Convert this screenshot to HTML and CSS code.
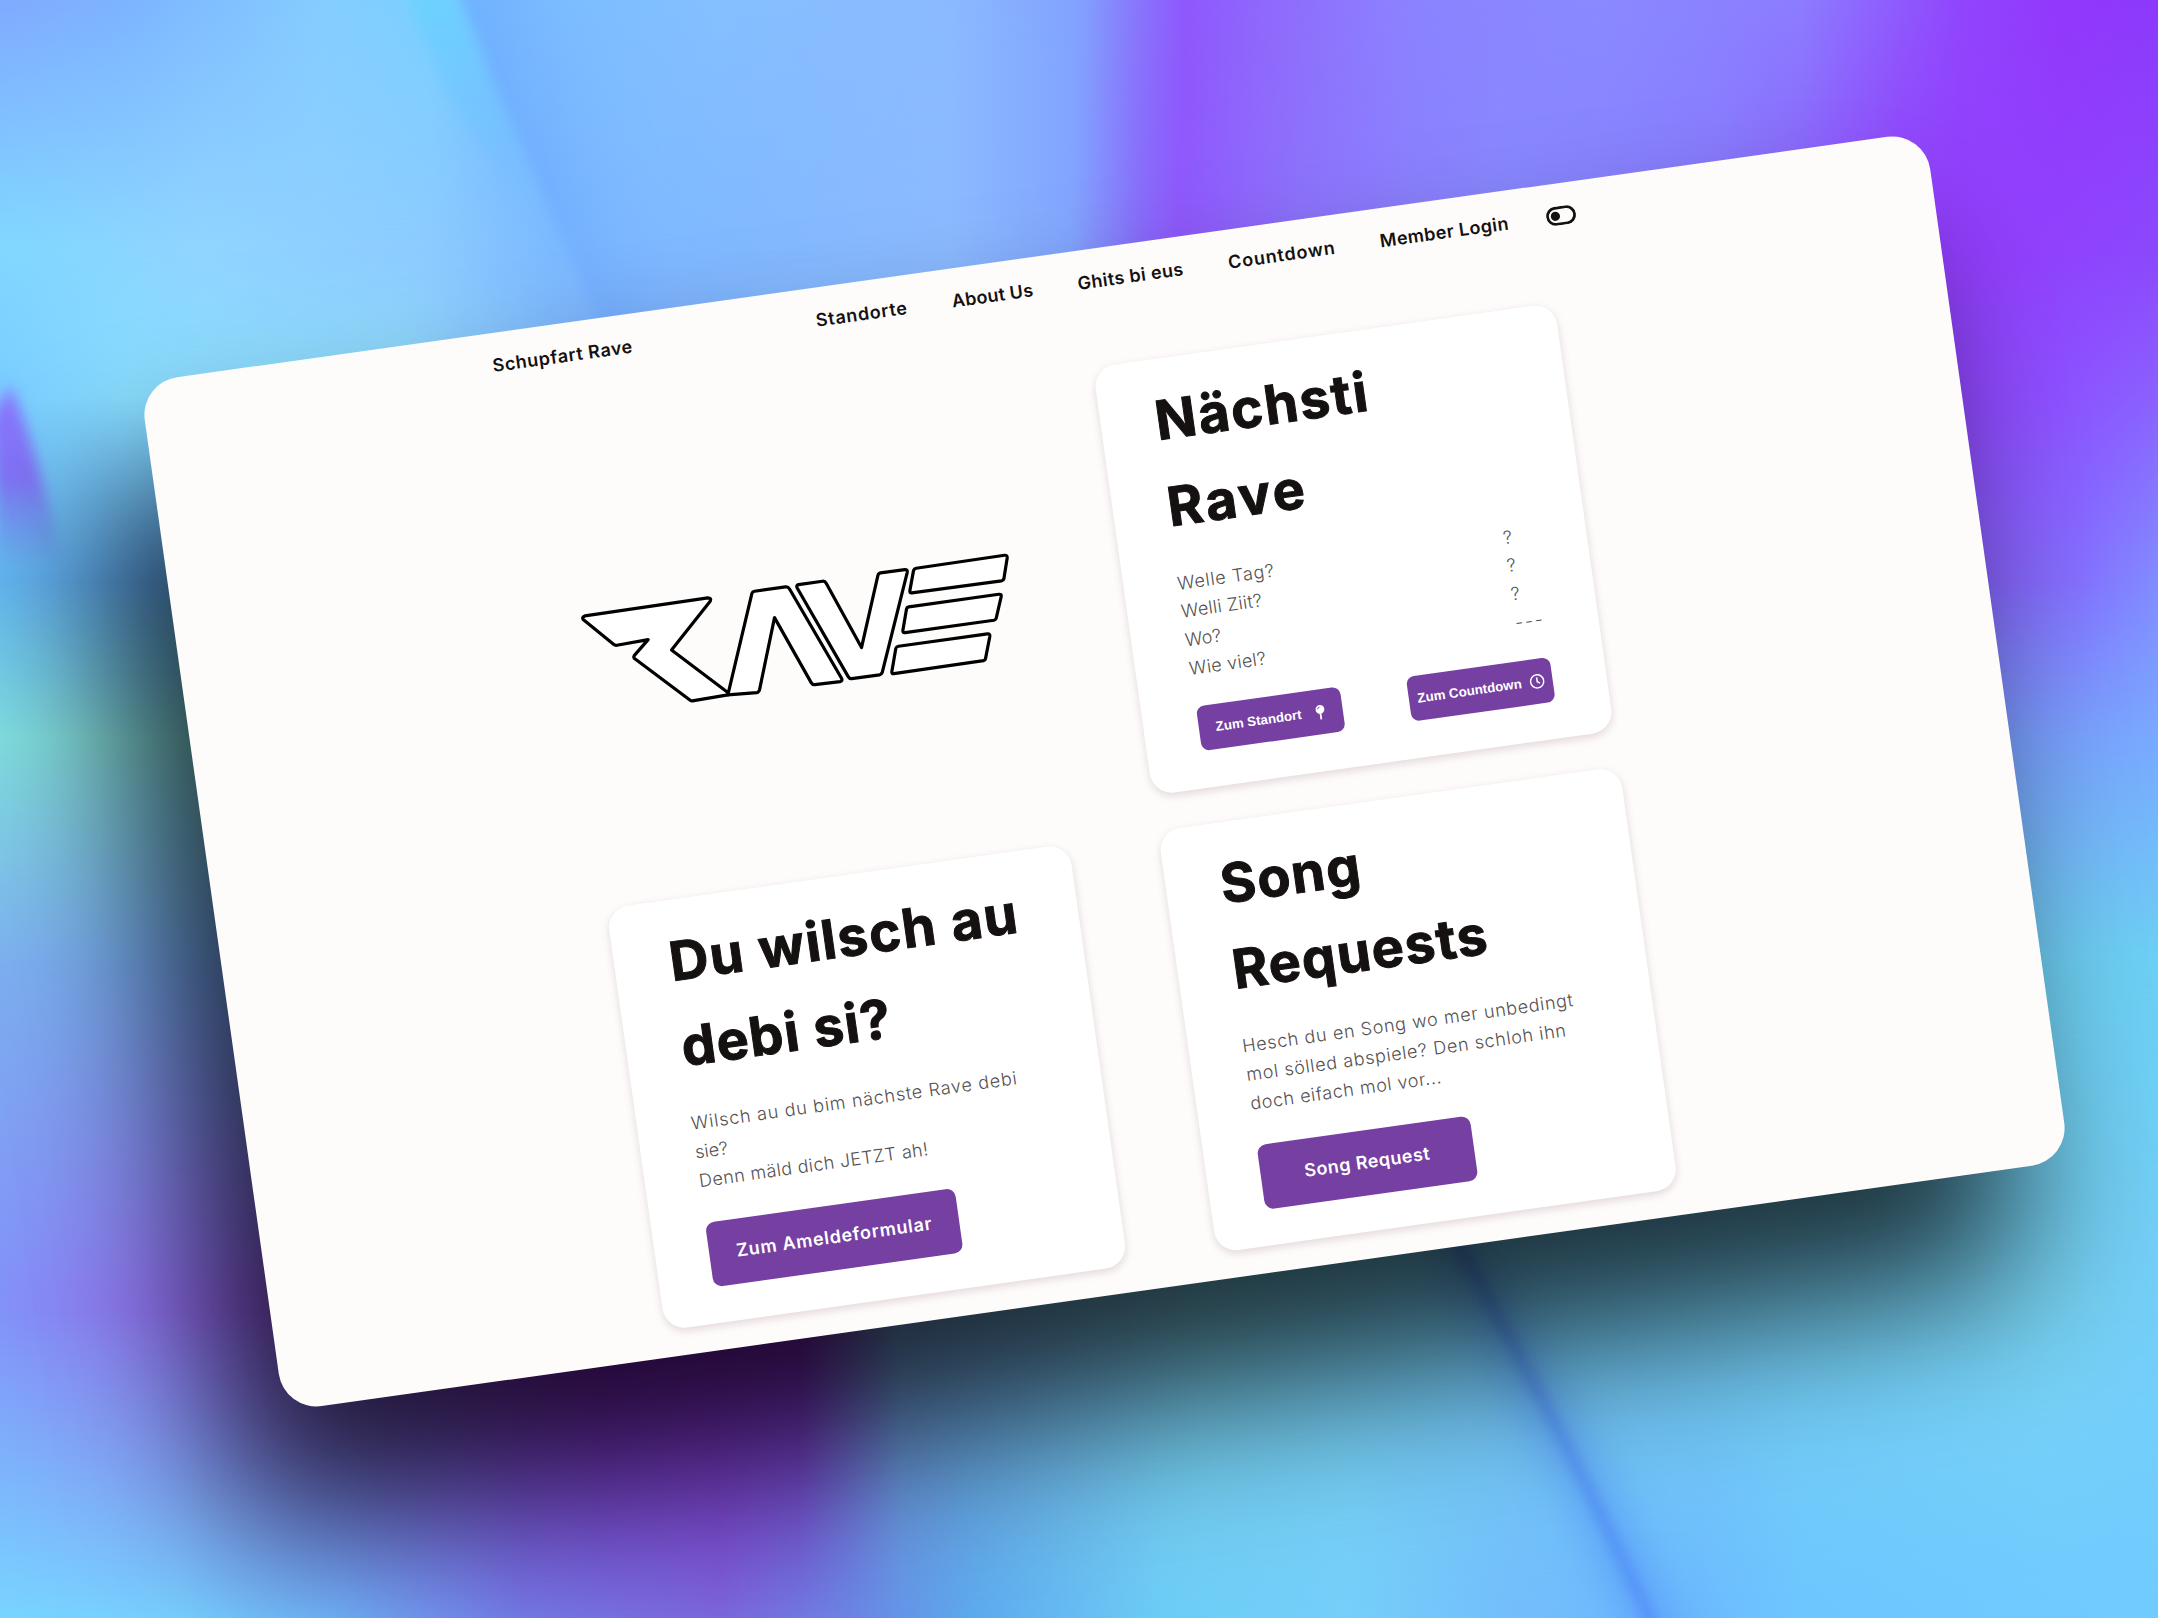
FILE: index.html
```html
<!DOCTYPE html>
<html lang="de-CH">
<head>
  <meta charset="utf-8">
  <title>Schupfart Rave</title>
  <link rel="stylesheet" href="styles.css">
</head>
<body>
  <div class="stage">
    <div class="backdrop">
      <div class="band band-1"></div>
      <div class="band band-2"></div>
      <div class="band band-3"></div>
      <div class="band band-4"></div>
      <div class="band band-5"></div>
      <div class="band band-6"></div>
      <div class="band band-7"></div>
      <div class="band band-8"></div>
      <svg class="streaks" viewBox="0 0 2158 1618" width="2158" height="1618">
        <defs>
          <filter id="soft" x="-50%" y="-50%" width="200%" height="200%"><feGaussianBlur stdDeviation="7"/></filter>
          <filter id="wide" x="-80%" y="-80%" width="260%" height="260%"><feGaussianBlur stdDeviation="22"/></filter>
          <filter id="shade" x="-20%" y="-30%" width="140%" height="160%" color-interpolation-filters="sRGB"><feGaussianBlur stdDeviation="76"/></filter>
          <linearGradient id="fold" gradientUnits="userSpaceOnUse" x1="520" y1="160" x2="640" y2="115">
            <stop offset="0" stop-color="#68a6ff" stop-opacity=".65"/>
            <stop offset="1" stop-color="#7fb6ff" stop-opacity="0"/>
          </linearGradient>
          <linearGradient id="cyan" x1="0" y1="0" x2="0" y2="1">
            <stop offset="0" stop-color="#6ad6ff"/>
            <stop offset="1" stop-color="#6ab8ff" stop-opacity="0"/>
          </linearGradient>
          <linearGradient id="wedge" x1="0" y1="0" x2="0" y2="1">
            <stop offset="0" stop-color="#8a78ff"/>
            <stop offset=".5" stop-color="#8272f8"/>
            <stop offset="1" stop-color="#6a80f0" stop-opacity="0"/>
          </linearGradient>
          <linearGradient id="ray" gradientUnits="userSpaceOnUse" x1="1460" y1="1250" x2="1680" y2="1640">
            <stop offset="0" stop-color="#3c74e0" stop-opacity=".7"/>
            <stop offset="1" stop-color="#4f8bfa"/>
          </linearGradient>
        </defs>
        <path d="M442 -40 L458 0 L499 100 L537 183 L608 340 L770 340 L600 -40 Z" fill="url(#fold)" filter="url(#soft)"/>
        <path d="M400 -40 L442 -40 L458 0 L499 100 L560 240 C500 180 430 100 400 -40 Z" fill="url(#cyan)" filter="url(#soft)"/>
        <path d="M10 385 C30 430 45 490 62 560 L0 570 L-10 420 Z" fill="url(#wedge)" filter="url(#soft)"/>
        <path d="M1445 1230 C1500 1330 1590 1480 1670 1660" fill="none" stroke="url(#ray)" stroke-width="44" filter="url(#wide)" opacity=".5"/>
        <path d="M1450 1230 C1510 1340 1590 1480 1668 1660" fill="none" stroke="url(#ray)" stroke-width="9" filter="url(#soft)"/>
        <rect x="148" y="362" width="1802" height="1039" rx="38" fill="#000" fill-opacity=".75" transform="rotate(-8 1103.75 771.5)" filter="url(#shade)"/>
      </svg>
    </div>

    <div class="window">
      <header class="navbar">
        <a class="brand">Schupfart Rave</a>
        <nav class="links">
          <a class="n-standorte">Standorte</a>
          <a class="n-about">About Us</a>
          <a class="n-ghits">Ghits bi eus</a>
          <a class="n-countdown">Countdown</a>
          <a class="n-login">Member Login</a>
          <svg class="toggle" viewBox="0 0 30 19" width="30" height="19">
            <rect x="1.4" y="1.4" width="27.2" height="16.2" rx="8.1" fill="none" stroke="#151111" stroke-width="2.8"/>
            <circle cx="9.3" cy="9.5" r="4.6" fill="#151111"/>
          </svg>
        </nav>
      </header>

      <main class="cards">
        <svg class="logo" viewBox="0 0 467 432">
          <g transform="translate(6.4 86.8) rotate(8) scale(.33333)" fill="#fff" stroke="#000" stroke-width="9.6" stroke-linejoin="round">
            <path d="M76 257 L445 203 Q457 203 452 213 L336 359 L505 487 L505 494 L403 511 Q396 513 391 509 L224 384 Q221 380 224 376 L266 328 L172 345 Q167 346 162 342 L71 268 Q66 261 76 257 Z"/>
            <path d="M505 494 L577 190 Q579 184 585 183 L678 170 Q686 169 690 176 L846 444 Q850 452 842 454 L766 463 Q759 464 755 457 L645 262 L600 479 Q598 486 592 487 Z"/>
            <path d="M717 163 L789 153 Q796 152 800 159 L906 352 L955 136 Q957 129 963 128 L1036 118 Q1045 118 1043 127 L968 427 Q966 433 960 434 L877 445 Q870 446 866 439 L713 173 Q709 165 717 163 Z"/>
            <path d="M1070 114 L1335 75 Q1344 74 1343 83 L1333 146 Q1332 151 1326 152 L1057 188 Q1050 189 1051 181 L1062 121 Q1064 115 1070 114 Z"/>
            <path d="M1048 230 L1318 192 Q1327 191 1325 199 L1310 264 Q1308 269 1303 270 L1037 307 Q1029 308 1030 301 L1041 236 Q1042 231 1048 230 Z"/>
            <path d="M1017 348 L1284 311 Q1292 310 1291 318 L1278 385 Q1277 390 1272 391 L1003 430 Q996 431 997 424 L1009 354 Q1011 349 1017 348 Z"/>
          </g>
        </svg>

        <section class="card">
          <h1><span class="h-next">Nächsti</span><br><span class="h-rave">Rave</span></h1>
          <div class="facts">
            <p><span class="t-day">Welle Tag?</span><br><span class="t-price">Welli Ziit?</span><br>Wo?<br><span class="t-price">Wie viel?</span></p>
            <p class="answers">?<br>?<br>?<br><span class="dashes">---</span></p>
          </div>
          <div class="actions">
            <button class="btn-small">Zum Standort
              <svg viewBox="0 0 11 16" width="11" height="16">
                <circle cx="5.5" cy="5" r="4.4" fill="#fff"/>
                <path d="M5.5 9v6" stroke="#fff" stroke-width="1.8"/>
                <path d="M3.2 4.8A2.3 2.3 0 0 1 5.5 2.6" fill="none" stroke="#7640a2" stroke-width=".8"/>
              </svg>
            </button>
            <button class="btn-small btn-clock">Zum Countdown
              <svg viewBox="0 0 15 15" width="15" height="15" fill="none" stroke="#fff" stroke-width="1.5">
                <circle cx="7.5" cy="7.5" r="6.6"/>
                <path d="M7.5 3.4v4.4l2.6 1.8"/>
              </svg>
            </button>
          </div>
        </section>

        <section class="card">
          <h1><span class="h-du">Du wilsch au</span><br><span class="h-debi">debi si?</span></h1>
          <p><span class="t-wilsch">Wilsch au du bim nächste Rave debi</span><br>sie?<br><span class="t-denn">Denn mäld dich JETZT ah!</span></p>
          <a class="btn btn-form">Zum Ameldeformular</a>
        </section>

        <section class="card">
          <h1><span class="h-song">Song</span><br><span class="h-song">Requests</span></h1>
          <p><span class="t-song">Hesch du en Song wo mer unbedingt</span><br><span class="t-song">mol sölled abspiele? Den schloh ihn</span><br><span class="t-vor">doch eifach mol vor...</span></p>
          <a class="btn btn-song">Song Request</a>
        </section>
      </main>
    </div>
  </div>
</body>
</html>
```

FILE: styles.css
```css
* { box-sizing: border-box; }
html { font-size: 18px; }
body {
  margin: 0;
  overflow: hidden;
  font-family: Inter, "Noto Sans", sans-serif;
  line-height: 1.6;
  color: #151111;
}
h1, p { margin: 0; }

.stage {
  display: grid;
  width: 2158px;
  height: 1618px;
  overflow: hidden;
}
.backdrop, .window { grid-area: 1 / 1; }
.backdrop { display: grid; isolation: isolate; }
.band, .streaks { grid-area: 1 / 1; display: block; }
.streaks { z-index: 1; }

/* Each band fades in from the previous one's height to its own. */
.band-1 { background: linear-gradient(90deg, #80aaff 0, #7db4ff 130px, #85cdff 320px, #7cd0ff 430px, #78bdff 500px, #85c0ff 720px, #8bbaff 950px, #82a2ff 1080px, #8878fc 1135px, #8f58fc 1185px, #9068fc 1260px, #8c82ff 1400px, #8a8aff 1600px, #8c7dff 1800px, #9146fc 1960px, #9337fc 2060px, #8c3afc 2158px); }
.band-2 { background: linear-gradient(90deg, #80d8ff 0, #90d5ff 200px, #8ccbff 430px, #7cbaff 550px, #80b8ff 700px, #8bbaff 950px, #82a6ff 1070px, #876cfb 1140px, #8f58fc 1180px, #8c73fc 1300px, #8888ff 1500px, #8778ff 1720px, #913cfc 1900px, #9140fc 2020px, #8c48fc 2158px); --a: 0px; --b: 250px; }
.band-3 { background: linear-gradient(90deg, #78ccff 0, #88dcff 120px, #90dcfa 400px, #7ca8fa 620px, #88c0ff 900px, #8888ff 1500px, #9040fa 1900px, #8c50ff 2050px, #8a62ff 2158px); --a: 250px; --b: 400px; }
.band-4 { background: linear-gradient(90deg, #64b8f4 0, #60a8ee 150px, #70c8f0 300px, #8888ff 1500px, #8458f4 1930px, #8470ff 2080px, #828cff 2158px); --a: 400px; --b: 580px; }
.band-5 { background: linear-gradient(90deg, #80dfe0 0, #82d8d8 100px, #78d0dc 300px, #8888ff 1500px, #7898fa 1960px, #78aaff 2158px); --a: 580px; --b: 740px; }
.band-6 { background: linear-gradient(90deg, #7cb0f0 0, #78acee 120px, #70a0f0 280px, #70c0e8 900px, #78c8f0 1500px, #6cd0f4 2158px); --a: 740px; --b: 960px; }
.band-7 { background: linear-gradient(90deg, #8292f8 0, #8c7aee 120px, #8c58e0 280px, #8410c4 600px, #7c18bc 800px, #70a0d8 900px, #78cce8 1200px, #70c8f0 1500px, #78d4f4 2050px, #74d0fa 2158px); --a: 960px; --b: 1290px; }
.band-8 { background: linear-gradient(90deg, #78d6ff 0, #76d0ff 180px, #70b4fc 340px, #747ce8 520px, #7c68de 720px, #6a86e4 850px, #5ca8ee 970px, #6cccf6 1160px, #74cffa 1350px, #74bcfc 1520px, #6cbaff 1700px, #6cc6ff 1800px, #70cbff 2158px); --a: 1310px; --b: 1625px; }
.band + .band {
  -webkit-mask-image: linear-gradient(180deg, transparent var(--a), #000 var(--b));
  mask-image: linear-gradient(180deg, transparent var(--a), #000 var(--b));
}

.window {
  width: 1802.5px;
  height: 1039px;
  margin: 252px 0 0 202.5px;
  padding: 18.5px 0 0 352px;
  border-radius: 38px;
  background: #fefcfb;
  transform: rotate(-8deg);
}

.navbar {
  display: flex;
  align-items: center;
  justify-content: space-between;
  width: 1094px;
  height: 29px;
  font-size: 18px;
  font-weight: 600;
}
.links { display: flex; align-items: center; gap: 45px; white-space: nowrap; }
.toggle { display: block; margin-left: -7px; }
.brand { letter-spacing: .57px; }
.n-standorte { letter-spacing: .7px; }
.n-about { letter-spacing: .2px; }
.n-ghits { letter-spacing: .42px; }
.n-countdown { letter-spacing: .88px; }
.n-login { letter-spacing: .4px; }

.cards {
  display: grid;
  grid-template-columns: 466.5px 466.5px;
  grid-template-rows: 432px 426.5px;
  gap: 35.5px 90px;
  width: 1023px;
  margin: 70.7px 0 0 37.2px;
}
.logo { display: block; width: 467px; height: 432px; overflow: visible; }
.card {
  display: flex;
  flex-direction: column;
  align-items: flex-start;
  padding: 19px 54px 36px;
  border-radius: 22px;
  background: #fff;
  box-shadow: 0 3px 9px rgba(80, 20, 40, .16);
  white-space: nowrap;
}
.card h1 {
  margin: 0 0 19.5px 1px;
  font-size: 54px;
  line-height: 86.4px;
  font-weight: 700;
  -webkit-text-stroke: 1px #151111;
}
.card p { font-size: 18px; line-height: 28.8px; font-weight: 300; color: #555151; }
.h-next { letter-spacing: 1.85px; }
.h-rave { letter-spacing: 2.9px; }
.h-du { letter-spacing: 1.5px; }
.h-debi { letter-spacing: 1.1px; }
.h-song { letter-spacing: 1.4px; }
.t-day { letter-spacing: .75px; }
.t-price { letter-spacing: .3px; }
.t-wilsch { letter-spacing: .8px; }
.t-denn { letter-spacing: .4px; }
.t-song { letter-spacing: .68px; }
.t-vor { letter-spacing: .6px; }
.dashes { letter-spacing: 1.8px; }
.facts, .actions { display: flex; justify-content: space-between; width: 100%; }
.answers { width: 29.5px; }
.actions { margin: auto 0 1px; padding-left: 1px; }

.btn-small {
  display: flex;
  align-items: center;
  justify-content: center;
  gap: 13px;
  width: 145px;
  height: 45px;
  padding: 0;
  border: 0;
  border-radius: 8px;
  background: #763fa2;
  color: #fff;
  font: 700 13.333px "Liberation Sans", sans-serif;
}
.btn-clock { gap: 8px; }
.btn {
  display: flex;
  align-items: center;
  justify-content: center;
  min-width: 215px;
  height: 65px;
  margin-top: auto;
  padding: 0 27px;
  border-radius: 9px;
  background: #763fa2;
  color: #fff;
  font-size: 18px;
  font-weight: 600;
}
.btn-form { letter-spacing: .75px; }
.btn-song { letter-spacing: .5px; }
```
